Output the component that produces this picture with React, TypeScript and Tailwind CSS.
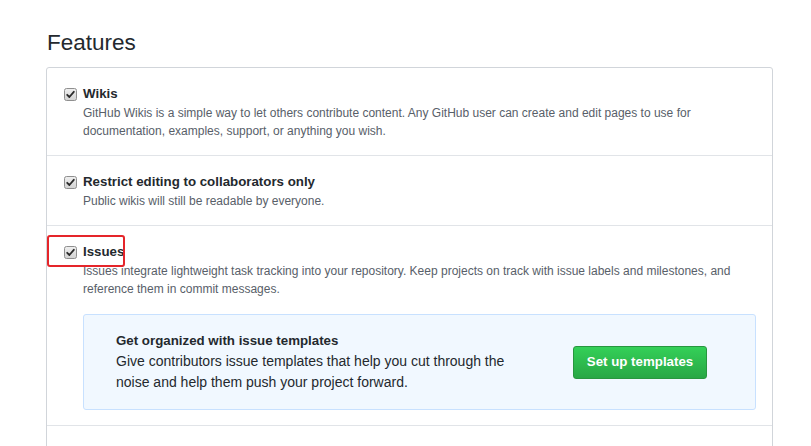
const font = { fontFamily: '"Liberation Sans", Arial, sans-serif' };

function Check() {
  return (
    <svg width="13" height="13" viewBox="0 0 13 13" className="shrink-0">
      <defs>
        <linearGradient id="cbg" x1="0" y1="0" x2="0" y2="1">
          <stop offset="0" stopColor="#f0f0f0" />
          <stop offset="1" stopColor="#d2d2d2" />
        </linearGradient>
      </defs>
      <rect x="0.5" y="0.5" width="12" height="12" rx="2" fill="url(#cbg)" stroke="#8f8f8f" />
      <path d="M3.2 6.8 L5.4 9 L9.8 3.8" fill="none" stroke="#2b2b2b" strokeWidth="1.8" strokeLinecap="round" strokeLinejoin="round" />
    </svg>
  );
}

function Row({ title, desc, children, mark }: { title: string; desc: string; children?: React.ReactNode; mark?: boolean }) {
  return (
    <div className="relative border-b border-[#e1e4e8] pt-4 pb-[15px] pl-[17px] pr-4">
      {mark && <div className="absolute left-0 top-[9px] w-[78px] h-[32px] border-2 border-[#e5252a] rounded-[3px]" />}
      <div className="flex items-center gap-[6px] h-5">
        <Check />
        <span className="text-[13.3px] font-bold text-[#24292e]">{title}</span>
      </div>
      <p className="pl-[19px] text-[12px] leading-[18px] text-[#586069]">{desc}</p>
      {children}
    </div>
  );
}

export default function App() {
  return (
    <div className="w-[811px] h-[446px] overflow-hidden bg-white pl-[46px] pt-[28px]" style={font}>
      <h2 className="text-[22.5px] leading-[30px] text-[#24292e] font-normal pl-px mb-[9px]">Features</h2>
      <div className="w-[727px] border border-[#d1d5da] rounded-t-[3px] h-[400px]">
        <Row
          title="Wikis"
          desc="GitHub Wikis is a simple way to let others contribute content. Any GitHub user can create and edit pages to use for documentation, examples, support, or anything you wish."
        />
        <Row title="Restrict editing to collaborators only" desc="Public wikis will still be readable by everyone." />
        <Row
          mark
          title="Issues"
          desc="Issues integrate lightweight task tracking into your repository. Keep projects on track with issue labels and milestones, and reference them in commit messages."
        >
          <div className="ml-[19px] mt-4 w-[673px] h-[96px] border border-[#c8e1ff] bg-[#f1f8ff] rounded-[3px] flex items-center pl-8 pr-[48px]">
            <div className="w-[400px]">
              <div className="text-[13.3px] leading-5 font-bold text-[#24292e]">Get organized with issue templates</div>
              <p className="text-[14px] leading-[21px] text-[#24292e]">
                Give contributors issue templates that help you cut through the noise and help them push your project forward.
              </p>
            </div>
            <button className="ml-auto w-[134px] h-[33px] rounded-[3px] border border-[#28963f] bg-gradient-to-b from-[#34d058] to-[#28a745] text-white text-[13.3px] font-bold">
              Set up templates
            </button>
          </div>
        </Row>
      </div>
    </div>
  );
}
